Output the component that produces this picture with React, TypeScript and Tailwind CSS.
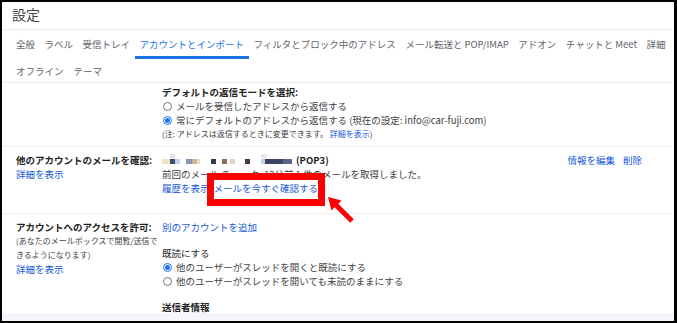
import React from "react";

const tabs = [
  "全般",
  "ラベル",
  "受信トレイ",
  "アカウントとインポート",
  "フィルタとブロック中のアドレス",
  "メール転送と POP/IMAP",
  "アドオン",
  "チャットと Meet",
  "詳細",
];

// mosaic that hides the mail address
const blocks: { x: number; w: number; y: number; h: number; c: string }[] = [
  { x: 0, w: 8, y: 5, h: 5, c: "#efe4c4" },
  { x: 8, w: 5, y: 5, h: 5, c: "#3d4d6c" },
  { x: 8, w: 5, y: 0, h: 4, c: "#dfe3ea" },
  { x: 13, w: 5, y: 5, h: 5, c: "#c5d2e3" },
  { x: 24, w: 6, y: 5, h: 5, c: "#8795ae" },
  { x: 30, w: 5, y: 5, h: 5, c: "#cdb38f" },
  { x: 35, w: 3, y: 5, h: 5, c: "#e6e0d0" },
  { x: 49, w: 5, y: 5, h: 5, c: "#343a46" },
  { x: 60, w: 5, y: 5, h: 5, c: "#8b705c" },
  { x: 68, w: 5, y: 5, h: 5, c: "#ddd6c6" },
  { x: 83, w: 5, y: 5, h: 5, c: "#4b3a36" },
  { x: 99, w: 4, y: 5, h: 5, c: "#c9d3e6" },
  { x: 99, w: 6, y: 0, h: 4, c: "#e3e6ee" },
  { x: 103, w: 18, y: 5, h: 5, c: "#3b4562" },
  { x: 121, w: 9, y: 5, h: 5, c: "#586884" },
];

const Radio = ({ checked }: { checked?: boolean }) =>
  checked ? (
    <span className="ml-[1px] mr-[4px] flex h-[9px] w-[9px] items-center justify-center rounded-full border border-[#1a73e8]">
      <span className="h-[5px] w-[5px] rounded-full bg-[#1a73e8]" />
    </span>
  ) : (
    <span className="ml-[1px] mr-[4px] h-[9px] w-[9px] rounded-full border border-[#777]" />
  );

export default function App() {
  return (
    <div
      className="relative flex h-[323px] w-[677px] flex-col overflow-hidden border-2 border-r-[3px] border-black bg-white text-[9.5px] text-[#3c4043]"
      style={{ fontFamily: '"Noto Sans CJK JP", "Noto Sans", sans-serif' }}
    >
      {/* title */}
      <div className="h-[28px] shrink-0 border-b border-[#ececec] pl-[10px] pt-[4px] text-[14px] leading-[16px] text-[#444]">
        設定
      </div>

      {/* tabs */}
      <div className="shrink-0 border-b border-[#ececec] pl-[14px] text-[#5f6368]">
        <div className="flex items-start gap-[9.5px] pt-[7px] leading-[14px]">
          {tabs.map((t) =>
            t === "アカウントとインポート" ? (
              <span
                key={t}
                className="mx-[-5px] whitespace-nowrap border-b-[3px] border-[#1a73e8] px-[5px] pb-[5px] text-[#1a73e8]"
              >
                {t}
              </span>
            ) : (
              <span key={t} className="whitespace-nowrap">
                {t}
              </span>
            )
          )}
        </div>
        <div className="flex gap-[10px] pb-[4px] pt-[5px] leading-[14px]">
          <span>オフライン</span>
          <span>テーマ</span>
        </div>
      </div>

      {/* reply mode */}
      <div className="flex shrink-0 border-b border-[#efefef] pb-[6px] pl-[14px] pt-[2px] leading-[14px]">
        <div className="w-[146px] shrink-0" />
        <div>
          <div className="font-bold text-[#222]">デフォルトの返信モードを選択:</div>
          <div className="flex items-center">
            <Radio />
            メールを受信したアドレスから返信する
          </div>
          <div className="flex items-center">
            <Radio checked />
            常にデフォルトのアドレスから返信する (現在の設定: info@car-fuji.com)
          </div>
          <div className="text-[8px] leading-[13px]">
            (注: アドレスは返信するときに変更できます。 <span className="text-[#1558d6]">詳細を表示</span>)
          </div>
        </div>
      </div>

      {/* other accounts */}
      <div className="flex shrink-0 border-b border-[#efefef] pb-[18px] pl-[14px] pr-[32px] pt-[6px] leading-[14px]">
        <div className="w-[146px] shrink-0">
          <div className="font-bold text-[#222]">他のアカウントのメールを確認:</div>
          <div className="text-[#1558d6]">詳細を表示</div>
        </div>
        <div className="flex-1">
          <div className="flex items-center justify-between">
            <div className="flex items-center">
              <svg width="130" height="12" viewBox="0 0 130 12">
                {blocks.map((b, i) => (
                  <rect key={i} x={b.x} y={b.y} width={b.w} height={b.h} fill={b.c} />
                ))}
              </svg>
              <span className="ml-[4px] font-bold text-[#222]">(POP3)</span>
            </div>
            <div className="flex gap-[8px] text-[#1558d6]">
              <span>情報を編集</span>
              <span>削除</span>
            </div>
          </div>
          <div>前回のメール チェック: 12分前 1 件のメールを取得しました。</div>
          <div className="flex text-[#1558d6]">
            <span>履歴を表示</span>
            <span className="ml-[4px]">メールを今すぐ確認する</span>
          </div>
        </div>
      </div>

      {/* grant access */}
      <div className="flex shrink-0 pl-[14px] pt-[6px] leading-[14px]">
        <div className="w-[146px] shrink-0">
          <div className="font-bold text-[#222]">アカウントへのアクセスを許可:</div>
          <div className="text-[8px]">(あなたのメールボックスで閲覧/送信で</div>
          <div className="text-[8px]">きるようになります)</div>
          <div className="text-[#1558d6]">詳細を表示</div>
        </div>
        <div>
          <div className="text-[#1558d6]">別のアカウントを追加</div>
          <div className="mt-[12px] text-[#222]">既読にする</div>
          <div className="flex items-center">
            <Radio checked />
            他のユーザーがスレッドを開くと既読にする
          </div>
          <div className="flex items-center">
            <Radio />
            他のユーザーがスレッドを開いても未読のままにする
          </div>
          <div className="mt-[13px] font-bold leading-[12px] text-[#222]">送信者情報</div>
        </div>
      </div>
      <div className="flex-1 bg-[#f6f6fa]" />

      {/* annotation: red box + arrow */}
      <div className="absolute left-[205px] top-[171px] h-[33px] w-[118px] border-[7px] border-[#ff0000]" />
      <svg className="absolute left-[322px] top-[191px]" width="32" height="32" viewBox="0 0 32 32">
        <polygon
          points="4,4 17.5,7.5 14.3,10.7 29.8,26.2 26.2,29.8 10.7,14.3 7.5,17.5"
          fill="#ff0000"
        />
      </svg>
    </div>
  );
}
